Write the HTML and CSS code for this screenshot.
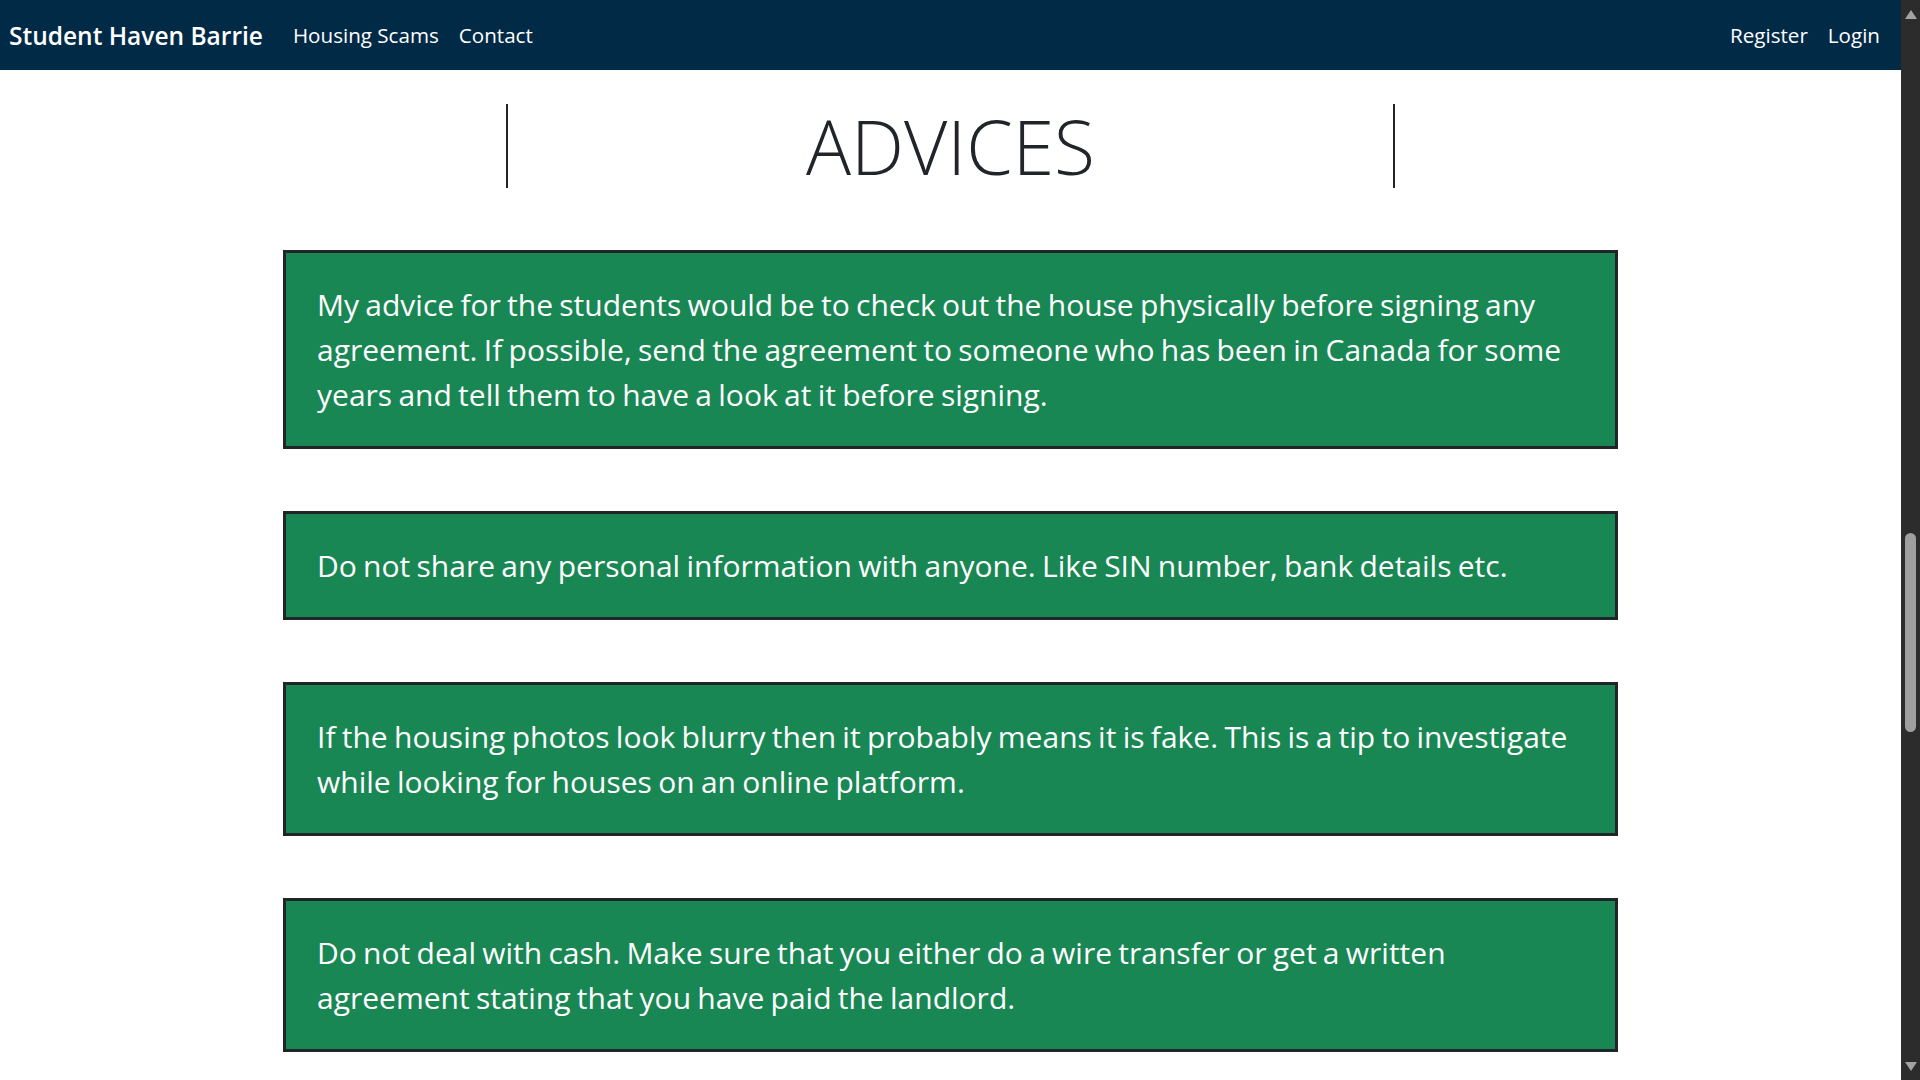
FILE: index.html
```html
<!DOCTYPE html>
<html lang="en">
<head>
<meta charset="utf-8">
<title>Advices - Student Haven Barrie</title>
<link rel="stylesheet" href="styles.css">
</head>
<body>
<div class="page">
  <nav class="navbar">
    <div class="nav-left">
      <a class="brand" href="#">Student Haven Barrie</a>
      <a class="nav-link" href="#">Housing Scams</a>
      <a class="nav-link" href="#">Contact</a>
    </div>
    <div class="nav-right">
      <a class="nav-link" href="#">Register</a>
      <a class="nav-link" href="#">Login</a>
    </div>
  </nav>
  <main class="content">
    <header class="title-box">
      <h1 class="title">ADVICES</h1>
    </header>
    <section class="advice-list">
      <div class="advice">My advice for the students would be to check out the house physically before signing any agreement. If possible, send the agreement to someone who has been in Canada for some years and tell them to have a look at it before signing.</div>
      <div class="advice">Do not share any personal information with anyone. Like SIN number, bank details etc.</div>
      <div class="advice">If the housing photos look blurry then it probably means it is fake. This is a tip to investigate while looking for houses on an online platform.</div>
      <div class="advice">Do not deal with cash. Make sure that you either do a wire transfer or get a written agreement stating that you have paid the landlord.</div>
    </section>
  </main>
</div>
<div class="scrollbar" aria-hidden="true">
  <span class="arrow arrow-up"></span>
  <div class="track"><span class="thumb"></span></div>
  <span class="arrow arrow-down"></span>
</div>
</body>
</html>
```
FILE: styles.css
```css
html, body { margin: 0; height: 100%; overflow: hidden; background: #fff; }
body { display: flex; color: #212529; font-family: "Open Sans", sans-serif; }
.page { flex: 1; min-width: 0; height: 100vh; overflow: hidden; }
.navbar { height: 70px; background: #012a47; display: flex; align-items: center; justify-content: space-between; padding: 0 11px 0 9px; }
.nav-left, .nav-right { display: flex; align-items: center; }
.brand { color: #fff; text-decoration: none; font-size: 24.5px; font-weight: 600; margin-right: 20px; }
.nav-link { color: #fff; text-decoration: none; font-size: 20.6px; font-weight: 500; padding: 0 10px; }
.content { padding-top: 34px; display: flex; flex-direction: column; align-items: center; }
.title-box { width: 885px; height: 84px; border-left: 2px solid #212529; border-right: 2px solid #212529; display: flex; align-items: center; justify-content: center; }
.title { margin: 0; font-size: 75px; font-weight: 300; color: #212529; line-height: 1; }
.advice-list { margin-top: 62px; display: flex; flex-direction: column; gap: 62px; width: 1335px; }
.advice { background: #198754; color: #fff; border: 3px solid #212529; padding: 29px 31px; font-size: 30px; line-height: 45px; word-spacing: -1.5px; }
.scrollbar { width: 19px; height: 100vh; background: #2c2c2c; display: flex; flex-direction: column; align-items: center; }
.arrow { width: 0; height: 0; border-left: 6.5px solid transparent; border-right: 6.5px solid transparent; }
.arrow-up { margin-top: 10px; border-bottom: 9px solid #a3a3a3; }
.arrow-down { margin-bottom: 9px; border-top: 9px solid #a3a3a3; }
.track { flex: 1; width: 100%; display: flex; justify-content: center; }
.thumb { margin-top: 514px; width: 11px; height: 199px; border-radius: 6px; background: #9f9f9f; }
```
